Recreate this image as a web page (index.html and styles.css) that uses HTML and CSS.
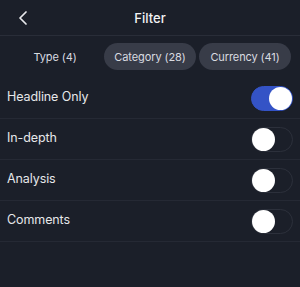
FILE: index.html
```html
<!DOCTYPE html>
<html lang="en">
<head>
  <meta charset="UTF-8">
  <title>Filter</title>
  <link rel="stylesheet" href="styles.css">
</head>
<body>
  <div class="screen">
    <div class="header">
      <span class="back">
        <svg width="10" height="14" viewBox="0 0 10 14">
          <polyline points="8,1 2,7 8,13" fill="none" stroke="#e8e9ec" stroke-width="1.7" stroke-linecap="round" stroke-linejoin="round"/>
        </svg>
      </span>
      <h1>Filter</h1>
    </div>

    <div class="tabs">
      <div class="tab">Type (4)</div>
      <div class="tab pill">Category (28)</div>
      <div class="tab pill">Currency (41)</div>
    </div>

    <ul class="options">
      <li><span>Headline Only</span><span class="toggle on"></span></li>
      <li><span>In-depth</span><span class="toggle"></span></li>
      <li><span>Analysis</span><span class="toggle"></span></li>
      <li><span>Comments</span><span class="toggle"></span></li>
    </ul>
  </div>
</body>
</html>
```

FILE: styles.css
```css
body {
  margin: 0;
  background: #1b1f29;
  font-family: Inter, 'Noto Sans', sans-serif;
  color: #e6e7ea;
}

.screen {
  width: 300px;
  height: 287px;
}

.header {
  height: 35px;
  border-bottom: 1px solid #292d38;
  display: flex;
  align-items: center;
  justify-content: center;
  position: relative;
}

.back {
  position: absolute;
  left: 18px;
  top: 11px;
  display: flex;
}

.header h1 {
  margin: 0;
  font-size: 13px;
  font-weight: 500;
  color: #f2f3f5;
}

.tabs {
  display: flex;
  gap: 3px;
  padding: 0 9px;
  margin-top: 7px;
}

.tab {
  flex: 1;
  height: 27px;
  display: flex;
  align-items: center;
  justify-content: center;
  font-size: 11px;
  letter-spacing: -0.1px;
  color: #d9dbe0;
  border-radius: 14px;
}

.tab.pill {
  background: #383c48;
}

.options {
  list-style: none;
  margin: 8px 0 0;
  padding: 0;
}

.options li {
  height: 40px;
  border-bottom: 1px solid #252934;
  display: flex;
  align-items: center;
  justify-content: space-between;
  padding: 0 7px;
  font-size: 12.5px;
  letter-spacing: -0.1px;
  color: #e6e7ea;
}

.options li span:first-child {
  margin-top: -3px;
}

.toggle {
  width: 42px;
  height: 25px;
  box-sizing: border-box;
  border-radius: 13px;
  border: 1px solid #2c303b;
  position: relative;
}

.toggle::after {
  content: "";
  position: absolute;
  top: 0;
  left: 0;
  width: 23px;
  height: 23px;
  border-radius: 50%;
  background: #fff;
}

.toggle.on {
  background: #3453c6;
  border-color: #3453c6;
}

.toggle.on::after {
  left: auto;
  right: 0;
}
```
